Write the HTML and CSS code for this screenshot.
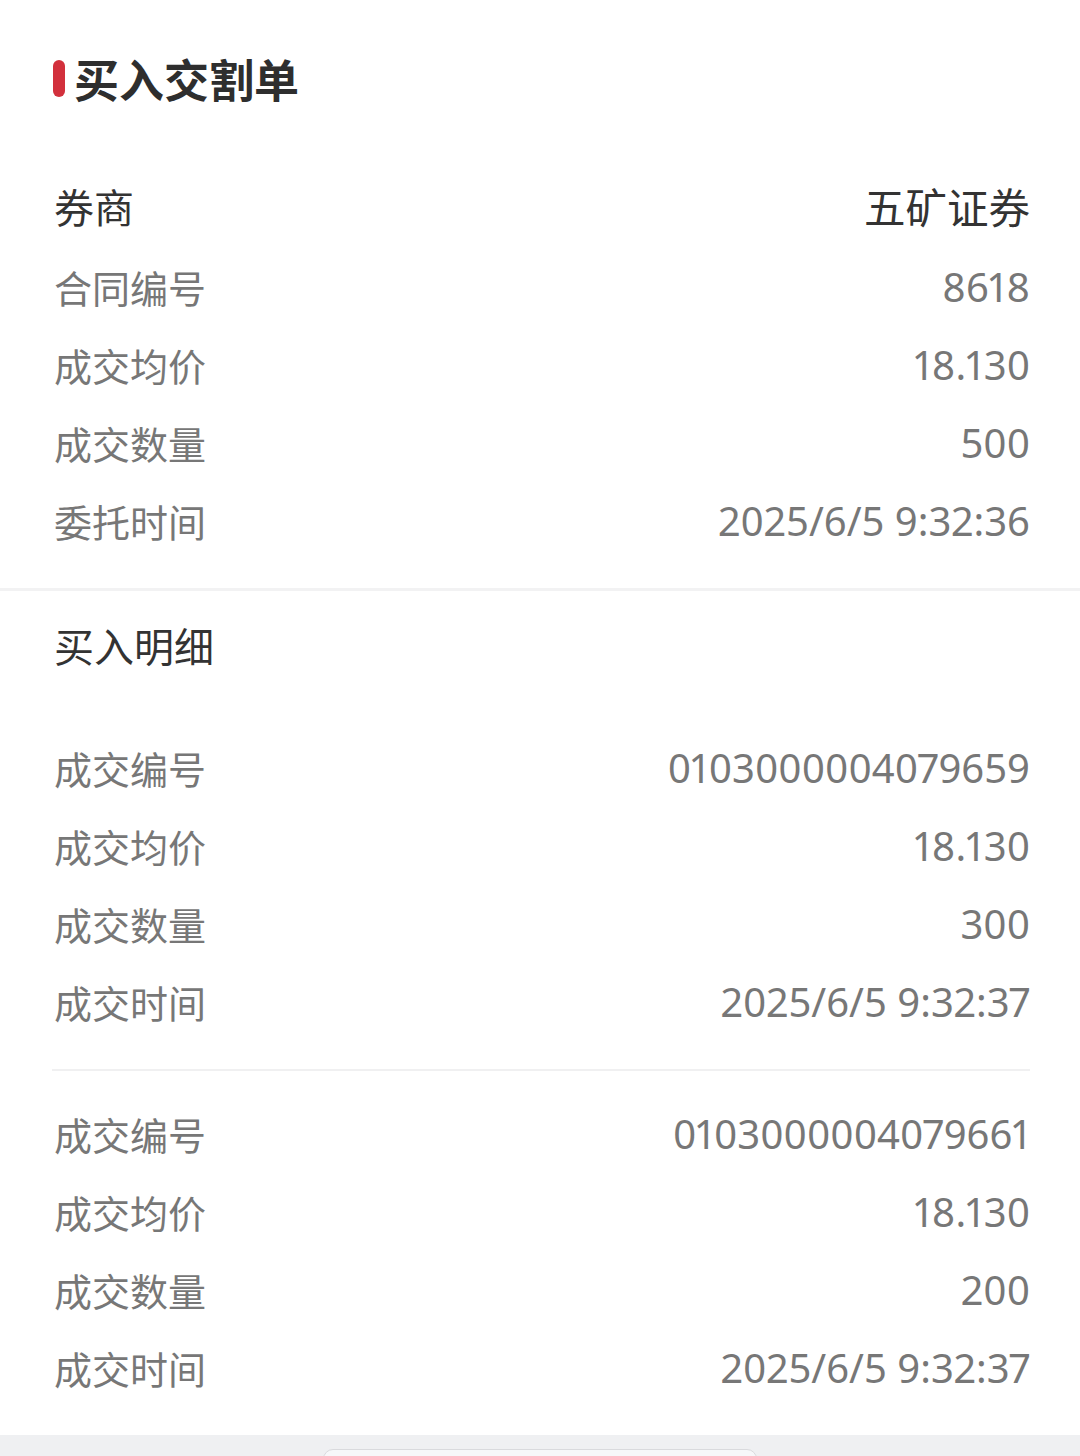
FILE: index.html
```html
<!DOCTYPE html>
<html lang="zh-CN">
<head>
<meta charset="utf-8">
<title>买入交割单</title>
<link rel="stylesheet" href="styles.css">
</head>
<body>
<div class="page">
  <section class="card">
    <header class="title-bar">
      <span class="mark"></span>
      <h1 class="title">买入交割单</h1>
    </header>
    <div class="rows">
      <div class="row first"><span class="label dark">券商</span><span class="value dark cjk">五矿证券</span></div>
      <div class="row"><span class="label">合同编号</span><span class="value">8618</span></div>
      <div class="row"><span class="label">成交均价</span><span class="value">18.130</span></div>
      <div class="row"><span class="label">成交数量</span><span class="value">500</span></div>
      <div class="row"><span class="label">委托时间</span><span class="value">2025/6/5 9:32:36</span></div>
    </div>
  </section>
  <div class="section-sep"></div>
  <section class="detail">
    <h2 class="sub-title">买入明细</h2>
    <div class="group">
      <div class="row"><span class="label">成交编号</span><span class="value">0103000004079659</span></div>
      <div class="row"><span class="label">成交均价</span><span class="value">18.130</span></div>
      <div class="row"><span class="label">成交数量</span><span class="value">300</span></div>
      <div class="row"><span class="label">成交时间</span><span class="value">2025/6/5 9:32:37</span></div>
    </div>
    <div class="group-sep"></div>
    <div class="group">
      <div class="row"><span class="label">成交编号</span><span class="value">0103000004079661</span></div>
      <div class="row"><span class="label">成交均价</span><span class="value">18.130</span></div>
      <div class="row"><span class="label">成交数量</span><span class="value">200</span></div>
      <div class="row"><span class="label">成交时间</span><span class="value">2025/6/5 9:32:37</span></div>
    </div>
  </section>
  <footer class="bottom-bar"><div class="handle"></div></footer>
</div>
</body>
</html>
```

FILE: styles.css
```css
* { box-sizing: border-box; }
html, body { margin: 0; padding: 0; background: #ffffff; }
body {
  font-family: "Noto Sans", "Noto Sans CJK SC", sans-serif;
  color: #777777;
  width: 1080px;
  height: 1456px;
  overflow: hidden;
}
.page { display: flex; flex-direction: column; min-height: 1456px; }

.title-bar {
  height: 160px;
  display: flex;
  align-items: center;
  padding-left: 53px;
  padding-bottom: 3px;
  gap: 9px;
}
.mark {
  width: 12px;
  height: 37px;
  border-radius: 6px;
  background: #d2303c;
}
.title {
  margin: 0;
  font-size: 45px;
  font-weight: 700;
  color: #2e2e2e;
  line-height: 1;
  font-family: "Noto Sans CJK SC", sans-serif;
}

.rows { padding: 9px 50px 26px 54px; }
.group { padding: 0 50px 0 54px; }

.row {
  height: 78px;
  display: flex;
  justify-content: space-between;
  align-items: center;
  padding-bottom: 5px;
}
.rows .row.first { margin-bottom: 3px; }
.label {
  font-family: "Noto Sans CJK SC", sans-serif;
  font-size: 38px;
  color: #777777;
}
.value {
  font-family: "Noto Sans", "Noto Sans CJK SC", sans-serif;
  font-size: 40px;
  color: #777777;
  font-variant-numeric: proportional-nums;
}
.label.dark { color: #333333; font-size: 40px; }
.value.dark { color: #333333; font-size: 41.5px; }
.value.cjk { font-family: "Noto Sans CJK SC", sans-serif; }

.section-sep { height: 3px; background: #f2f2f3; }

.detail { padding-bottom: 26px; }
.sub-title {
  margin: 18px 0 44px;
  padding-left: 54px;
  height: 78px;
  line-height: 72px;
  font-size: 40px;
  font-weight: 400;
  color: #333333;
  font-family: "Noto Sans CJK SC", sans-serif;
}
.group-sep {
  height: 2px;
  background: #f0f0f1;
  margin: 26px 50px 26px 52px;
}

.bottom-bar {
  flex: 1;
  background: #eff0f2;
  display: flex;
  justify-content: center;
  padding-top: 14px;
}
.handle {
  width: 434px;
  height: 20px;
  border-radius: 10px;
  background: #f6f7f9;
  border: 1px solid #d9dadd;
}
```
